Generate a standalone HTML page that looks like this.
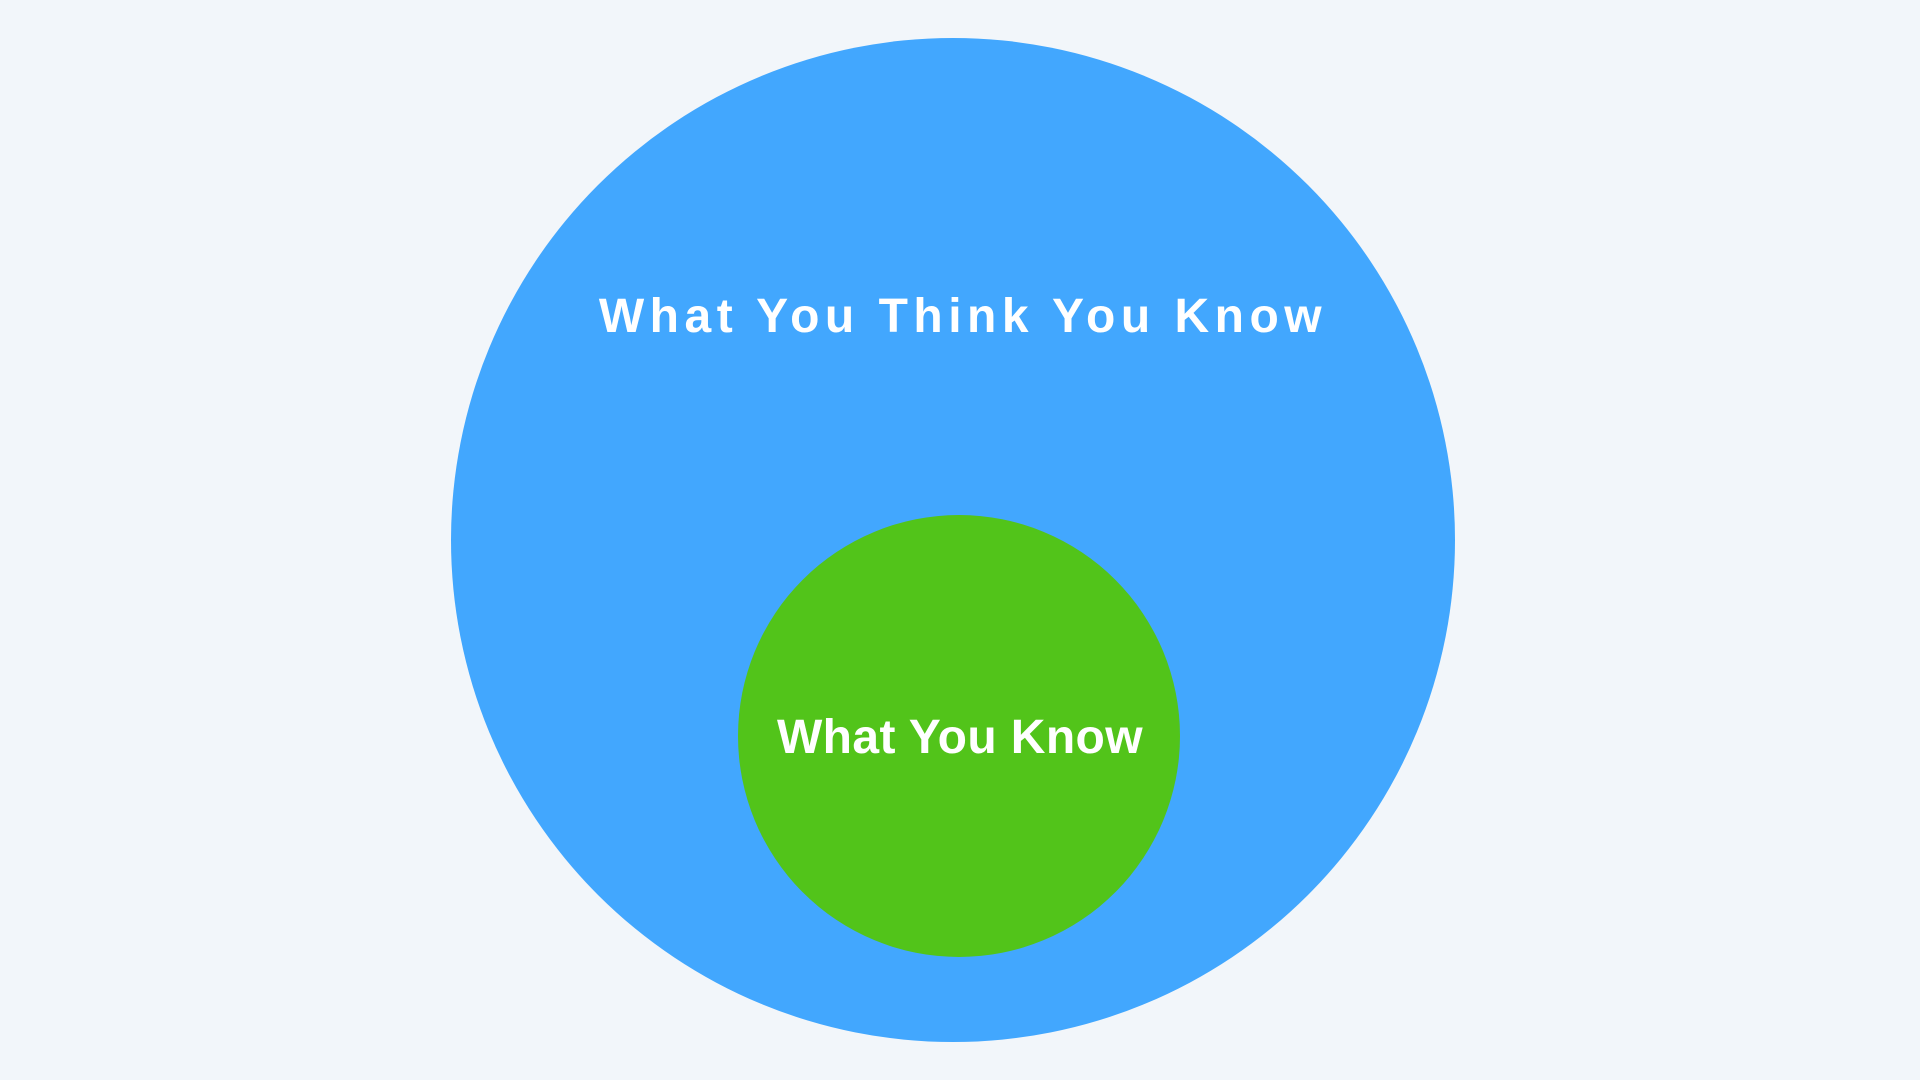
<!DOCTYPE html>
<html><head><meta charset="utf-8"><style>
html,body{margin:0;padding:0;width:1920px;height:1080px;background:#f2f6fa;overflow:hidden;position:relative;font-family:"Liberation Sans",sans-serif}
.c{position:absolute;border-radius:50%}
.t{position:absolute;left:0;width:1920px;text-align:center;color:#fff;font-weight:bold;font-size:48px;line-height:48px;white-space:nowrap}
</style></head><body>
<div class="c" style="left:451px;top:38px;width:1004px;height:1004px;background:#42a7fe"></div>
<div class="c" style="left:738px;top:515px;width:442px;height:442px;background:#52c41a"></div>
<div class="t" style="top:293px;letter-spacing:5.5px;left:0;padding-left:6px;width:1914px">What You Think You Know</div>
<div class="t" style="top:714px;left:0;letter-spacing:0.4px">What You Know</div>
</body></html>
